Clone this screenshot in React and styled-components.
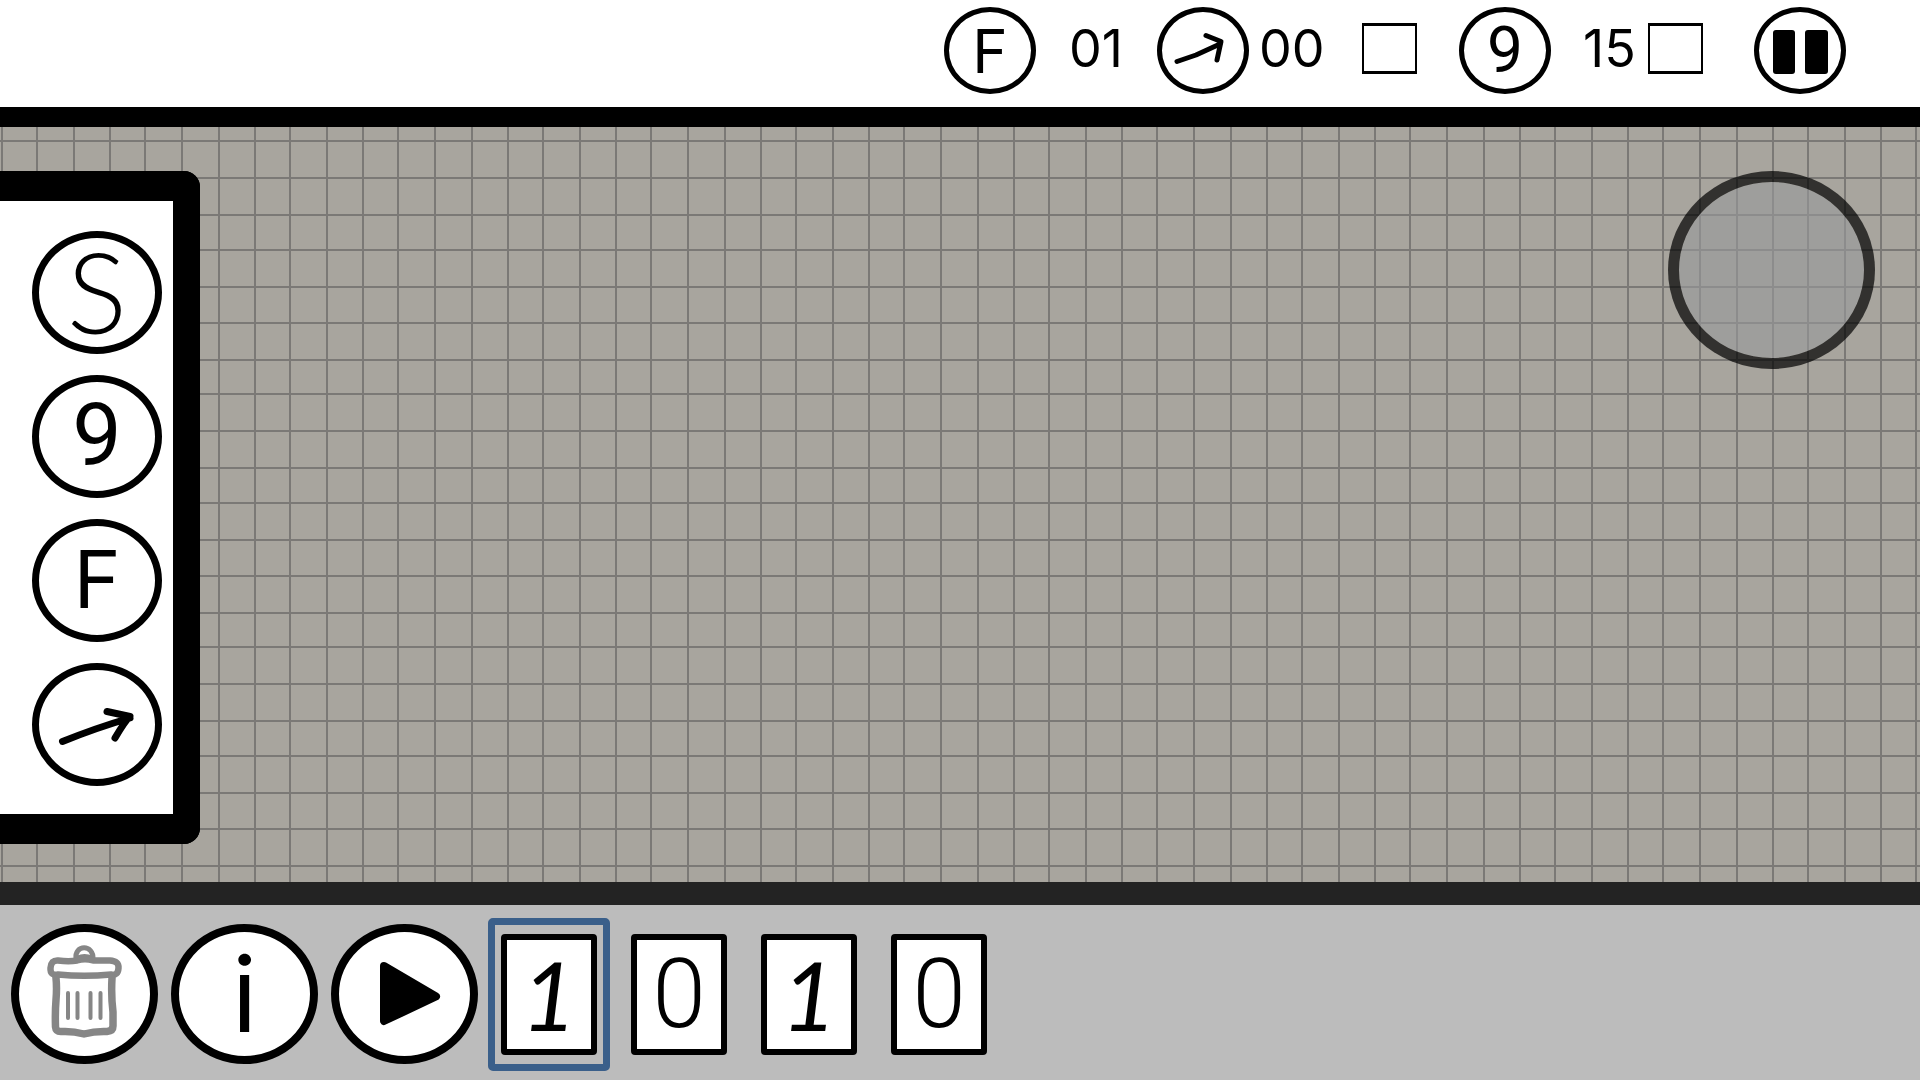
import React, { useState } from "react";
import styled, { createGlobalStyle } from "styled-components";

const GlobalStyle = createGlobalStyle`
  *, *::before, *::after { box-sizing: border-box; }
  body {
    margin: 0;
    background: #bcbcbc;
    color: #000;
    font-family: Inter, "Liberation Sans", sans-serif;
  }
  button { font: inherit; color: inherit; }
`;

const CELLS_X = [0, 35, 72, 108, 143, 180, 217];
const CELLS_Y = [0, 37, 74, 109, 146, 182, 219];

const Page = styled.div`
  display: flex;
  flex-direction: column;
  min-height: 100vh;
`;

const TopBar = styled.header`
  display: flex;
  align-items: center;
  justify-content: flex-end;
  height: 127px;
  padding: 0 74px 6px 0;
  background: #fff;
  border-bottom: 20px solid #000;
`;

const Oval = styled.button`
  display: flex;
  align-items: center;
  justify-content: center;
  flex: none;
  width: ${(p) => p.$w}px;
  height: ${(p) => p.$h}px;
  padding: 0;
  border: ${(p) => p.$line}px solid #000;
  border-radius: 50%;
  background: #fff;
  cursor: pointer;
`;

const Badge = styled(Oval).attrs({ $w: 92, $h: 87, $line: 5 })``;
const PieceButton = styled(Oval).attrs({ $w: 130, $h: 123, $line: 7 })`
  padding-bottom: 4px;
`;
const ActionButton = styled(Oval).attrs({ $w: 147, $h: 140, $line: 8 })``;

const Glyph = styled.span`
  font-family: ${(p) => p.$family || "Inter"}, "Liberation Sans", sans-serif;
  font-size: ${(p) => p.$size}px;
  font-weight: ${(p) => p.$weight || 400};
  font-style: ${(p) => (p.$slant ? "italic" : "normal")};
  line-height: 1;
`;

const Drawing = styled.svg`
  display: block;
  flex: none;
  overflow: visible;
  fill: none;
  stroke: currentColor;
  stroke-linecap: round;
  stroke-linejoin: round;
`;

const Count = styled.output`
  width: ${(p) => p.$width}px;
  padding: 0 0 4px ${(p) => p.$inset}px;
  font-size: 52px;
  line-height: 1;
  white-space: nowrap;
`;

const Tick = styled.input`
  appearance: none;
  flex: none;
  width: 55px;
  height: 51px;
  margin: 0 ${(p) => p.$after}px 4px 0;
  border: 2px solid #000;
  border-top-width: 3px;
  border-bottom-width: 3px;
  background: #fff;
  &:checked { background: #000; }
`;

const Arena = styled.main`
  position: relative;
  display: flex;
  flex: 1;
  align-items: flex-start;
  justify-content: space-between;
  padding: 44px 45px 38px 0;
  background: #a8a59e;
`;

const Paper = styled.svg`
  position: absolute;
  inset: 0;
  width: 100%;
  height: 100%;
`;

const Palette = styled.nav`
  position: relative;
  display: flex;
  flex-direction: column;
  gap: 21px;
  width: 200px;
  padding: 30px 0 28px 32px;
  border: solid #000;
  border-width: 30px 27px 30px 0;
  border-radius: 0 16px 16px 0;
  background: #fff;
`;

const Joystick = styled.div`
  position: relative;
  width: 207px;
  height: 198px;
  border: 11px solid rgba(0, 0, 0, 0.7);
  border-radius: 50%;
  background: rgba(152, 153, 155, 0.6);
  background-clip: padding-box;
`;

const BottomBar = styled.footer`
  display: flex;
  align-items: center;
  gap: 10px;
  height: 198px;
  padding: 3px 11px 0;
  border-top: 23px solid #232323;
  background: #bcbcbc;
`;

const Actions = styled.div`
  display: flex;
  gap: 13px;
`;

const Bits = styled.div`
  display: flex;
  gap: 8px;
`;

const Slot = styled.div`
  padding: 9px 6px;
  border: 7px solid ${(p) => (p.$active ? "#3a5f8a" : "transparent")};
  border-radius: 5px;
`;

const Card = styled.button`
  display: flex;
  align-items: center;
  justify-content: center;
  width: 96px;
  height: 121px;
  padding: 0;
  border: 6px solid #000;
  border-radius: 4px;
  background: #fff;
  cursor: pointer;
`;

function GraphPaper() {
  return (
    <Paper aria-hidden="true">
      <defs>
        <pattern id="cells" x="1" y="13" width="253" height="253" patternUnits="userSpaceOnUse">
          {CELLS_X.map((x) => (
            <rect key={"x" + x} x={x} y="0" width="2" height="253" fill="#7b7976" />
          ))}
          {CELLS_Y.map((y) => (
            <rect key={"y" + y} x="0" y={y} width="253" height="2" fill="#7b7976" />
          ))}
        </pattern>
      </defs>
      <rect width="100%" height="100%" fill="url(#cells)" />
    </Paper>
  );
}

function SmallArrow() {
  return (
    <Drawing width="92" height="87" viewBox="0 0 92 87" strokeWidth="5">
      <path d="M20 54.5L39 48L63 37M49 28.5L64 34.5L60 53" />
    </Drawing>
  );
}

function LargeArrow() {
  return (
    <Drawing width="130" height="123" viewBox="0 0 130 123" strokeWidth="7">
      <path d="M30.5 80.5C54 71 74 64 98 57M75 50.5L98 55.5Q93 60 83 77" />
    </Drawing>
  );
}

function PauseIcon() {
  return (
    <Drawing width="92" height="87" viewBox="0 0 92 87">
      <rect x="19" y="23" width="22" height="44" rx="3" fill="#000" stroke="none" />
      <rect x="51" y="23" width="23" height="44" rx="3" fill="#000" stroke="none" />
    </Drawing>
  );
}

function TrashIcon() {
  return (
    <Drawing width="148" height="140" viewBox="0 0 148 140" color="#868686">
      <path strokeWidth="5" d="M65 35C63 20 83 20 82 35M67 34Q73 31 81 34" />
      <path
        strokeWidth="6.5"
        d="M47 36.5Q58 38 66 36.5Q74 34 82 36.5L99 36.5Q108 37 107.5 44Q107 52 100 50.5Q73 53 47 50.5Q39 52 39.5 44Q40 36 47 36.5Z"
      />
      <path
        strokeWidth="7.5"
        d="M45 54Q46 64 45 76Q44 88 44.5 103Q45 108 51 107.5Q62 107 73 110Q84 107 96 107.5Q102 107 102 102V88Q100 72 101 54"
      />
      <path strokeWidth="4" d="M57 69V94M66.5 69V94M79.5 69V94M89.5 69V94" />
    </Drawing>
  );
}

function PlayIcon() {
  return (
    <Drawing width="148" height="140" viewBox="0 0 148 140" strokeWidth="8">
      <path fill="#000" d="M53 42L105 72.5L53 97Z" />
    </Drawing>
  );
}

export default function App() {
  const [bits, setBits] = useState([1, 0, 1, 0]);
  const [active, setActive] = useState(0);

  const flip = (index) => {
    setActive(index);
    setBits(bits.map((bit, i) => (i === index ? 1 - bit : bit)));
  };

  return (
    <Page>
      <GlobalStyle />
      <TopBar>
        <Badge><Glyph $size={60}>F</Glyph></Badge>
        <Count $width={121} $inset={33}>01</Count>
        <Badge aria-label="Arrow"><SmallArrow /></Badge>
        <Count $width={113} $inset={10}>00</Count>
        <Tick type="checkbox" aria-label="Arrow done" $after={42} />
        <Badge><Glyph $size={64} $family="Roboto">9</Glyph></Badge>
        <Count $width={97} $inset={32}>15</Count>
        <Tick type="checkbox" aria-label="Nine done" $after={51} />
        <Badge aria-label="Pause"><PauseIcon /></Badge>
      </TopBar>

      <Arena>
        <GraphPaper />
        <Palette aria-label="Pieces">
          <PieceButton><Glyph $size={112} $weight={300} $family="Lato">S</Glyph></PieceButton>
          <PieceButton><Glyph $size={88} $family="Roboto">9</Glyph></PieceButton>
          <PieceButton><Glyph $size={80}>F</Glyph></PieceButton>
          <PieceButton aria-label="Arrow"><LargeArrow /></PieceButton>
        </Palette>
        <Joystick role="group" aria-label="Joystick" />
      </Arena>

      <BottomBar>
        <Actions>
          <ActionButton aria-label="Delete"><TrashIcon /></ActionButton>
          <ActionButton><Glyph $size={104}>i</Glyph></ActionButton>
          <ActionButton aria-label="Play"><PlayIcon /></ActionButton>
        </Actions>
        <Bits>
          {bits.map((bit, i) => (
            <Slot key={i} $active={i === active}>
              <Card onClick={() => flip(i)}>
                <Glyph
                  $size={96}
                  $weight={bit ? 400 : 300}
                  $slant={bit === 1}
                  $family={bit ? "Lato" : "Roboto"}
                >
                  {bit}
                </Glyph>
              </Card>
            </Slot>
          ))}
        </Bits>
      </BottomBar>
    </Page>
  );
}
